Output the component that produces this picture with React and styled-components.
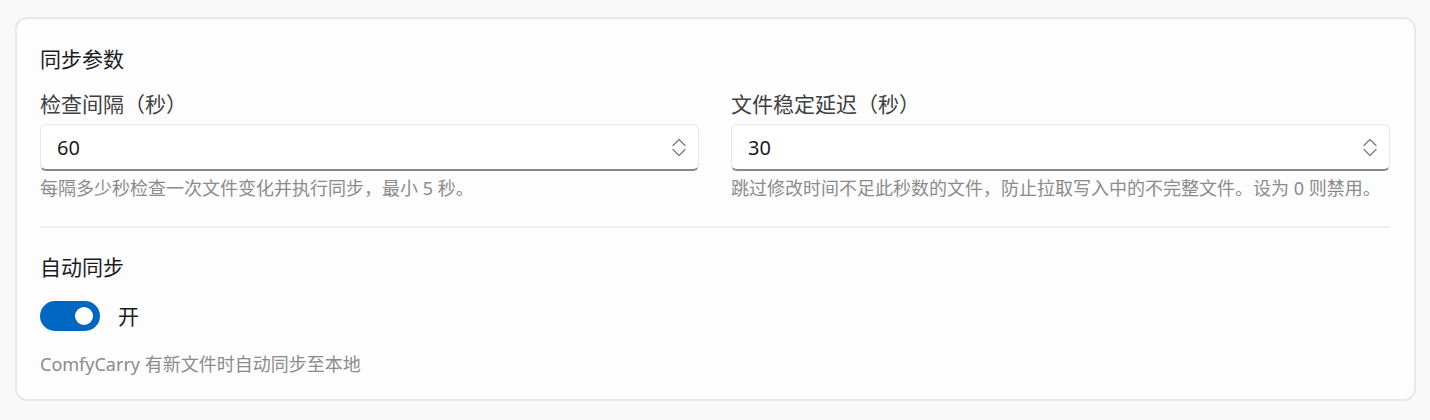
import styled, { createGlobalStyle } from "styled-components";

const GlobalStyle = createGlobalStyle`
    body {
        margin: 0;
        background: #f9f9f9;
        font-family: "Noto Sans", "Noto Sans CJK SC", sans-serif;
    }
`;

const Page = styled.div`
    padding: 17px 14px 19px 15px;
`;

const Card = styled.section`
    background: #fdfdfd;
    border: 2px solid #e9e9e9;
    border-radius: 12px;
    padding: 26px 24px 22px 23px;
`;

const Title = styled.div`
    font-size: 21px;
    line-height: 28px;
    color: #1b1b1b;
    margin-top: ${(p) => p.$top || 0}px;
`;

const Grid = styled.div`
    display: grid;
    grid-template-columns: 1fr 1fr;
    column-gap: 32px;
    margin-top: 17px;
`;

const Field = styled.div`
    display: flex;
    flex-direction: column;
    min-width: 0;
`;

const Label = styled.label`
    font-size: 21px;
    line-height: 28px;
    color: #404040;
`;

const Box = styled.div`
    margin-top: 6px;
    height: 47px;
    box-sizing: border-box;
    display: flex;
    align-items: center;
    background: #ffffff;
    border: 1px solid #e6e6e6;
    border-bottom: 2px solid #878787;
    border-radius: 6px;
    padding: 0 12px 0 16px;
`;

const Input = styled.input`
    flex: 1;
    min-width: 0;
    border: none;
    outline: none;
    background: transparent;
    padding: 0;
    font-family: inherit;
    font-size: 20px;
    color: #1b1b1b;
`;

const Hint = styled.div`
    font-size: 18px;
    line-height: 26px;
    color: #8b8b8b;
    margin-top: ${(p) => p.$top || 0}px;
`;

const Divider = styled.hr`
    border: none;
    height: 2px;
    background: #eeeeee;
    margin: 25px 0 0;
`;

const SwitchRow = styled.div`
    display: flex;
    align-items: center;
    gap: 18px;
    margin-top: 20px;
`;

const Track = styled.div`
    width: 60px;
    height: 30px;
    box-sizing: border-box;
    border-radius: 15px;
    background: ${(p) => (p.$on ? "#0067c0" : "#ffffff")};
    display: flex;
    align-items: center;
    justify-content: ${(p) => (p.$on ? "flex-end" : "flex-start")};
    padding: 0 7px;
`;

const Knob = styled.span`
    width: 18px;
    height: 18px;
    border-radius: 50%;
    background: #ffffff;
`;

const SwitchText = styled.span`
    font-size: 21px;
    line-height: 28px;
    color: #1b1b1b;
`;

const Spinner = () => (
    <svg width="14" height="19" viewBox="0 0 14 19" fill="none" stroke="#7c7c7c" strokeWidth="1.3" strokeLinecap="round" strokeLinejoin="round">
        <path d="M1 7.5 L7 1.5 L13 7.5" />
        <path d="M1 11.5 L7 17.5 L13 11.5" />
    </svg>
);

const NumberField = ({ label, value, hint }) => (
    <Field>
        <Label>{label}</Label>
        <Box>
            <Input defaultValue={value} readOnly />
            <Spinner />
        </Box>
        <Hint $top={4}>{hint}</Hint>
    </Field>
);

export default function App() {
    return (
        <Page>
            <GlobalStyle />
            <Card>
                <Title>同步参数</Title>
                <Grid>
                    <NumberField
                        label="检查间隔（秒）"
                        value="60"
                        hint="每隔多少秒检查一次文件变化并执行同步，最小 5 秒。"
                    />
                    <NumberField
                        label="文件稳定延迟（秒）"
                        value="30"
                        hint="跳过修改时间不足此秒数的文件，防止拉取写入中的不完整文件。设为 0 则禁用。"
                    />
                </Grid>
                <Divider />
                <Title $top={25}>自动同步</Title>
                <SwitchRow>
                    <Track $on>
                        <Knob />
                    </Track>
                    <SwitchText>开</SwitchText>
                </SwitchRow>
                <Hint $top={20}>ComfyCarry 有新文件时自动同步至本地</Hint>
            </Card>
        </Page>
    );
}
